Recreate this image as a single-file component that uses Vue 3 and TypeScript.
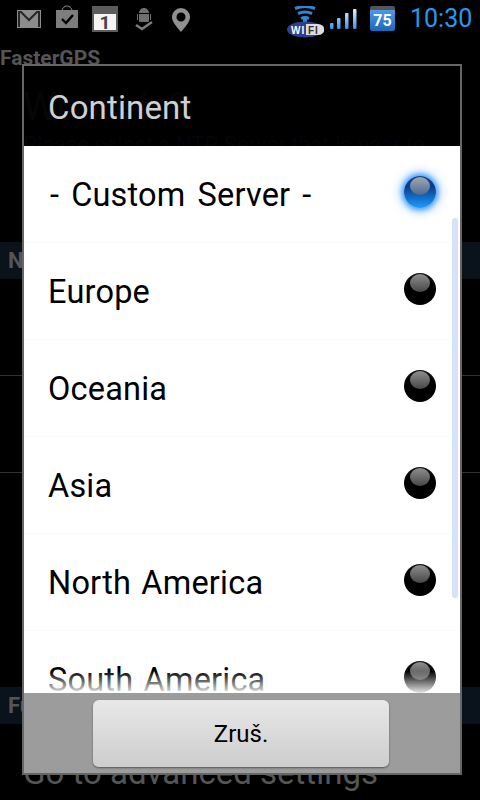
<script setup lang="ts">
interface Option { name: string; selected: boolean }
const options: Option[] = [
  { name: '- Custom Server -', selected: true },
  { name: 'Europe', selected: false },
  { name: 'Oceania', selected: false },
  { name: 'Asia', selected: false },
  { name: 'North America', selected: false },
  { name: 'South America', selected: false },
]
const bars = [
  { x: 1, y: 14, h: 6 },
  { x: 8, y: 9, h: 11 },
  { x: 16, y: 4, h: 16 },
  { x: 24, y: 0, h: 20 },
]
</script>

<template>
  <div class="screen">
    <header class="status">
      <svg class="ic-mail" width="24" height="18" viewBox="0 0 24 18">
        <rect width="24" height="18" fill="#8c8c8c" />
        <path d="M2 17V2h2l8 8 8-8h2v15" fill="none" stroke="#262626" stroke-width="2" />
      </svg>
      <svg class="ic-bag" width="22" height="24" viewBox="0 0 22 24">
        <path d="M6 6a5 5 0 0 1 10 0" fill="none" stroke="#8c8c8c" stroke-width="1" />
        <rect y="5" width="22" height="18" fill="#7d7d7d" />
        <path d="M6 14l4 4 7-8" fill="none" stroke="#000" stroke-width="2.4" />
      </svg>
      <div class="ic-cal"><span>1</span></div>
      <svg class="ic-droid" width="18" height="23" viewBox="0 0 18 23">
        <path d="M4 5a5 5 0 0 1 10 0zM4 6h10v7a1 1 0 0 1-1 1H5a1 1 0 0 1-1-1zM2 6h1v6H2zM15 6h1v6h-1z" fill="#6f6f6f" />
        <path d="M1 17l6 4 10-7" fill="none" stroke="#7d7d7d" stroke-width="2.4" />
      </svg>
      <svg class="ic-pin" width="18" height="24" viewBox="0 0 18 24">
        <path fill-rule="evenodd" d="M9 0a9 9 0 0 1 9 9c0 5-5 10-9 15C5 19 0 14 0 9a9 9 0 0 1 9-9zm0 4.500a4.500 4.500 0 1 0 0 9 4.500 4.500 0 0 0 0-9z" fill="#909090" />
      </svg>
      <span class="spacer"></span>
      <svg class="ic-wifi" width="38" height="32" viewBox="0 0 38 32">
        <path d="M9 2.500q10-4 20 0M12 7.500q7-3 14 0M15 12.500q4-2 8 0" fill="none" stroke="#2f86d6" stroke-width="3" />
        <path d="M19 12v5" stroke="#2f86d6" stroke-width="4" />
        <ellipse cx="19" cy="23.500" rx="18" ry="8" fill="#2d3f8f" />
        <path d="M20 18h12a4 3.500 0 0 1 0 11H20z" fill="#dcdcdc" />
        <text x="5" y="27.500" class="wifi-a">WI</text>
        <text x="22" y="27.500" class="wifi-b">FI</text>
      </svg>
      <svg class="ic-signal" width="28" height="21" viewBox="0 0 28 21">
        <defs>
          <linearGradient id="sig" x1="0" y1="0" x2="0" y2="21" gradientUnits="userSpaceOnUse">
            <stop offset="0" stop-color="#e6f2ff" />
            <stop offset="1" stop-color="#2a8be8" />
          </linearGradient>
        </defs>
        <rect v-for="b in bars" :key="b.x" :x="b.x" :y="b.y" width="3.500" :height="b.h" rx="1" fill="url(#sig)" />
      </svg>
      <div class="ic-batt"><span>75</span></div>
      <span class="clock">10:30</span>
    </header>

    <div class="app-title">FasterGPS</div>
    <div class="heading">Where is?</div>
    <div class="sub">Please select a NTP Server that is near to</div>
    <div class="section">NTP Server</div>
    <div class="bg-row"></div>
    <div class="bg-row"></div>
    <div class="bg-fill"></div>
    <div class="section">Further settings</div>
    <div class="advanced">Go to advanced settings</div>

    <div class="dialog">
      <div class="dlg-title">Continent</div>
      <div class="list">
        <div v-for="o in options" :key="o.name" class="row">
          <span class="label" :class="{ wide: o.selected }">{{ o.name }}</span>
          <span class="radio" :class="{ on: o.selected }"></span>
        </div>
        <div class="thumb"></div>
        <div class="fade"></div>
      </div>
      <div class="footer">
        <button class="cancel" type="button">Zruš.</button>
      </div>
    </div>
  </div>
</template>

<style>
html, body { margin: 0; background: #000; }
</style>

<style scoped>
.screen {
  position: relative;
  width: 480px;
  height: 800px;
  overflow: hidden;
  background: #000;
  font-family: Roboto, sans-serif;
  display: flex;
  flex-direction: column;
}
.status {
  height: 46px;
  display: flex;
  align-items: flex-start;
  flex: none;
}
.status > * { flex: none; }
.ic-mail { margin: 10px 0 0 17px; }
.ic-bag { margin: 5px 0 0 15px; }
.ic-cal {
  margin: 6px 0 0 14px;
  width: 26px;
  height: 26px;
  box-sizing: border-box;
  border: 2px solid #5c5c5c;
  border-top-width: 8px;
  background: #f4f4f4;
  display: flex;
  align-items: center;
  justify-content: center;
}
.ic-cal span {
  font: 700 19px/1 Roboto, sans-serif;
  color: #444;
}
.ic-droid { margin: 8px 0 0 17px; }
.ic-pin { margin: 8px 0 0 19px; }
.spacer { flex: 1; }
.ic-wifi { margin: 6px 0 0 0; }
.wifi-a, .wifi-b { font: 700 10px "Liberation Sans", sans-serif; letter-spacing: 1px; }
.wifi-a { fill: #fff; }
.wifi-b { fill: #333; }
.ic-signal { margin: 9px 0 0 5px; }
.ic-batt {
  margin: 6px 0 0 13px;
  width: 25px;
  height: 25px;
  border-radius: 2px;
  background: linear-gradient(#4a9be6, #1c67b8);
  border-top: 4px solid #555;
  box-sizing: border-box;
  display: flex;
  align-items: center;
  justify-content: center;
}
.ic-batt span {
  font: 700 16px/1 Roboto, sans-serif;
  color: #fff;
}
.clock {
  margin: 1px 10px 0 15px;
  font-size: 25px;
  line-height: 36px;
  color: #259bec;
  width: 60px;
  white-space: nowrap;
}
.app-title {
  height: 24px;
  font-size: 21px;
  font-weight: 700;
  line-height: 24px;
  color: #555;
  flex: none;
}
.heading {
  height: 60px;
  padding-left: 23px;
  font-size: 38px;
  line-height: 74px;
  color: #222;
  flex: none;
  white-space: nowrap;
}
.sub {
  height: 112px;
  padding-left: 23px;
  font-size: 22px;
  line-height: 30px;
  color: #0a1a30;
  flex: none;
  white-space: nowrap;
  overflow: hidden;
}
.section {
  height: 37px;
  flex: none;
  padding-left: 8px;
  background: #0a121c;
  color: #555;
  font-size: 22px;
  font-weight: 700;
  line-height: 37px;
  white-space: nowrap;
}
.bg-row {
  height: 97px;
  flex: none;
  box-sizing: border-box;
  border-bottom: 1px solid #333;
}
.bg-fill { height: 214px; flex: none; }
.advanced {
  padding-left: 23px;
  margin-top: 30px;
  font-size: 33px;
  line-height: 38px;
  color: #555;
  white-space: nowrap;
}
.dialog {
  position: absolute;
  left: 22px;
  top: 64px;
  width: 440px;
  height: 711px;
  box-sizing: border-box;
  border: 2px solid #666;
  display: flex;
  flex-direction: column;
}
.dlg-title {
  height: 80px;
  flex: none;
  box-sizing: border-box;
  padding-left: 24px;
  font-size: 33px;
  line-height: 84px;
  letter-spacing: 0.15px;
  color: #d0d0d0;
  background: rgba(0, 0, 0, 0.8);
}
.list {
  position: relative;
  flex: 1;
  min-height: 0;
  overflow: hidden;
  background: #fff;
}
.row {
  height: 97px;
  box-sizing: border-box;
  padding: 0 24px;
  display: flex;
  align-items: center;
  justify-content: space-between;
  border-bottom: 1px solid #fbfbfb;
}
.label {
  padding-top: 2px;
  font-size: 32.5px;
  letter-spacing: 0.2px;
  word-spacing: 2px;
  color: #000;
}
.label.wide {
  margin-left: 2px;
  word-spacing: 3.7px;
}
.radio {
  position: relative;
  width: 32px;
  height: 32px;
  margin-bottom: 5px;
  border-radius: 50%;
  background: radial-gradient(circle at 50% 62%, #000 60%, #333 100%);
}
.radio::after {
  content: "";
  position: absolute;
  left: 6px;
  top: 1px;
  width: 20px;
  height: 18px;
  border-radius: 50%;
  background: linear-gradient(#8e8e8e, #474747);
  filter: blur(0.6px);
}
.radio.on {
  background: linear-gradient(#0b3f8c 35%, #1a9cff 100%);
  box-shadow: 0 0 5px 2px #3f9dff, 0 0 10px 5px rgba(110, 180, 255, 0.45);
}
.radio.on::after {
  background: linear-gradient(#a2a8b0, #4b6a92);
}
.thumb {
  position: absolute;
  right: 2px;
  top: 72px;
  width: 6px;
  height: 380px;
  border-radius: 3px;
  background: #d6e2fa;
}
.fade {
  position: absolute;
  left: 0;
  right: 0;
  bottom: 0;
  height: 22px;
  background: linear-gradient(rgba(255, 255, 255, 0), rgba(255, 255, 255, 0.9));
}
.footer {
  height: 80px;
  flex: none;
  box-sizing: border-box;
  padding: 7px 0 0 69px;
  background: #9c9c9c;
}
.cancel {
  display: block;
  width: 296px;
  height: 67px;
  padding: 0;
  border: 0;
  border-radius: 6px;
  background: linear-gradient(#e8e8e8, #cdcdcd);
  box-shadow: 0 1px 2px #555;
  font-family: Roboto, sans-serif;
  font-size: 24px;
  color: #000;
}
</style>
